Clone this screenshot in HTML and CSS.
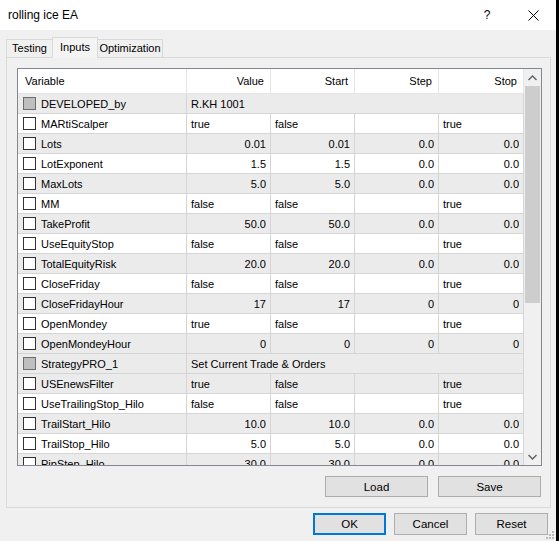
FILE: index.html
```html
<!DOCTYPE html>
<html lang="en">
<head>
    <meta charset="UTF-8">
    <title>rolling ice EA</title>
    <link rel="stylesheet" href="styles.css">
</head>
<body>
<div class="window">
    <div class="titlebar">
        <div class="title">rolling ice EA</div>
        <div class="caption-btn">?</div>
        <div class="caption-btn">
            <svg width="11" height="11" viewBox="0 0 11 11"><path d="M0.5 0.5 L10.5 10.5 M10.5 0.5 L0.5 10.5" stroke="#000" stroke-width="1" fill="none"/></svg>
        </div>
    </div>

    <div class="client">
        <div class="tabs">
            <div class="tab tab-testing">Testing</div>
            <div class="tab tab-inputs active">Inputs</div>
            <div class="tab tab-optimization">Optimization</div>
        </div>

        <div class="panel">
            <div class="grid">
                <div class="rows">
                    <div class="row head">
                        <div class="cell left">Variable</div>
                        <div class="cell">Value</div>
                        <div class="cell">Start</div>
                        <div class="cell">Step</div>
                        <div class="cell">Stop</div>
                    </div>

                    <div class="row section">
                        <div class="cell var"><span class="check disabled"></span>DEVELOPED_by</div>
                        <div class="cell wide">R.KH 1001</div>
                    </div>
                    <div class="row">
                        <div class="cell var"><span class="check"></span>MARtiScalper</div>
                        <div class="cell left">true</div>
                        <div class="cell left">false</div>
                        <div class="cell"></div>
                        <div class="cell left">true</div>
                    </div>
                    <div class="row alt">
                        <div class="cell var"><span class="check"></span>Lots</div>
                        <div class="cell">0.01</div>
                        <div class="cell">0.01</div>
                        <div class="cell">0.0</div>
                        <div class="cell">0.0</div>
                    </div>
                    <div class="row">
                        <div class="cell var"><span class="check"></span>LotExponent</div>
                        <div class="cell">1.5</div>
                        <div class="cell">1.5</div>
                        <div class="cell">0.0</div>
                        <div class="cell">0.0</div>
                    </div>
                    <div class="row alt">
                        <div class="cell var"><span class="check"></span>MaxLots</div>
                        <div class="cell">5.0</div>
                        <div class="cell">5.0</div>
                        <div class="cell">0.0</div>
                        <div class="cell">0.0</div>
                    </div>
                    <div class="row">
                        <div class="cell var"><span class="check"></span>MM</div>
                        <div class="cell left">false</div>
                        <div class="cell left">false</div>
                        <div class="cell"></div>
                        <div class="cell left">true</div>
                    </div>
                    <div class="row alt">
                        <div class="cell var"><span class="check"></span>TakeProfit</div>
                        <div class="cell">50.0</div>
                        <div class="cell">50.0</div>
                        <div class="cell">0.0</div>
                        <div class="cell">0.0</div>
                    </div>
                    <div class="row">
                        <div class="cell var"><span class="check"></span>UseEquityStop</div>
                        <div class="cell left">false</div>
                        <div class="cell left">false</div>
                        <div class="cell"></div>
                        <div class="cell left">true</div>
                    </div>
                    <div class="row alt">
                        <div class="cell var"><span class="check"></span>TotalEquityRisk</div>
                        <div class="cell">20.0</div>
                        <div class="cell">20.0</div>
                        <div class="cell">0.0</div>
                        <div class="cell">0.0</div>
                    </div>
                    <div class="row">
                        <div class="cell var"><span class="check"></span>CloseFriday</div>
                        <div class="cell left">false</div>
                        <div class="cell left">false</div>
                        <div class="cell"></div>
                        <div class="cell left">true</div>
                    </div>
                    <div class="row alt">
                        <div class="cell var"><span class="check"></span>CloseFridayHour</div>
                        <div class="cell">17</div>
                        <div class="cell">17</div>
                        <div class="cell">0</div>
                        <div class="cell">0</div>
                    </div>
                    <div class="row">
                        <div class="cell var"><span class="check"></span>OpenMondey</div>
                        <div class="cell left">true</div>
                        <div class="cell left">false</div>
                        <div class="cell"></div>
                        <div class="cell left">true</div>
                    </div>
                    <div class="row alt">
                        <div class="cell var"><span class="check"></span>OpenMondeyHour</div>
                        <div class="cell">0</div>
                        <div class="cell">0</div>
                        <div class="cell">0</div>
                        <div class="cell">0</div>
                    </div>
                    <div class="row section">
                        <div class="cell var"><span class="check disabled"></span>StrategyPRO_1</div>
                        <div class="cell wide">Set Current Trade &amp; Orders</div>
                    </div>
                    <div class="row alt">
                        <div class="cell var"><span class="check"></span>USEnewsFilter</div>
                        <div class="cell left">true</div>
                        <div class="cell left">false</div>
                        <div class="cell"></div>
                        <div class="cell left">true</div>
                    </div>
                    <div class="row">
                        <div class="cell var"><span class="check"></span>UseTrailingStop_Hilo</div>
                        <div class="cell left">false</div>
                        <div class="cell left">false</div>
                        <div class="cell"></div>
                        <div class="cell left">true</div>
                    </div>
                    <div class="row alt">
                        <div class="cell var"><span class="check"></span>TrailStart_Hilo</div>
                        <div class="cell">10.0</div>
                        <div class="cell">10.0</div>
                        <div class="cell">0.0</div>
                        <div class="cell">0.0</div>
                    </div>
                    <div class="row">
                        <div class="cell var"><span class="check"></span>TrailStop_Hilo</div>
                        <div class="cell">5.0</div>
                        <div class="cell">5.0</div>
                        <div class="cell">0.0</div>
                        <div class="cell">0.0</div>
                    </div>
                    <div class="row alt">
                        <div class="cell var"><span class="check"></span>PipStep_Hilo</div>
                        <div class="cell">30.0</div>
                        <div class="cell">30.0</div>
                        <div class="cell">0.0</div>
                        <div class="cell">0.0</div>
                    </div>
                </div>

                <div class="scrollbar">
                    <div class="sb-btn">
                        <svg width="9" height="6" viewBox="0 0 9 6"><path d="M0.5 5 L4.5 1 L8.5 5" stroke="#606060" stroke-width="1.4" fill="none"/></svg>
                    </div>
                    <div class="sb-track">
                        <div class="sb-thumb"></div>
                    </div>
                    <div class="sb-btn">
                        <svg width="9" height="6" viewBox="0 0 9 6"><path d="M0.5 1 L4.5 5 L8.5 1" stroke="#606060" stroke-width="1.4" fill="none"/></svg>
                    </div>
                </div>
            </div>

            <div class="panel-buttons">
                <button class="btn wide-btn">Load</button>
                <button class="btn wide-btn">Save</button>
            </div>
        </div>

        <div class="dialog-buttons">
            <button class="btn default">OK</button>
            <button class="btn">Cancel</button>
            <button class="btn">Reset</button>
        </div>

        <svg class="grip" width="9" height="9" viewBox="0 0 9 9">
            <rect x="6" y="0" width="2" height="2" fill="#b9b9b9"/>
            <rect x="3" y="3" width="2" height="2" fill="#b9b9b9"/>
            <rect x="6" y="3" width="2" height="2" fill="#b9b9b9"/>
            <rect x="0" y="6" width="2" height="2" fill="#b9b9b9"/>
            <rect x="3" y="6" width="2" height="2" fill="#b9b9b9"/>
            <rect x="6" y="6" width="2" height="2" fill="#b9b9b9"/>
        </svg>
    </div>
</div>
</body>
</html>
```

FILE: styles.css
```css
body {
    margin: 0;
    background-color: #f0f0f0;
    font-family: "Liberation Sans", Arial, sans-serif;
    font-size: 11px;
    color: #000;
}
.window {
    width: 556px;
    height: 541px;
    border-right: 3px solid #000;
    background-color: #f0f0f0;
    display: flex;
    flex-direction: column;
}
.titlebar {
    height: 30px;
    background-color: #fff;
    display: flex;
    align-items: center;
    padding-left: 8px;
    font-size: 12px;
}
.title {
    flex: 1;
}
.caption-btn {
    width: 46px;
    height: 30px;
    display: flex;
    align-items: center;
    justify-content: center;
    font-size: 12px;
}
.client {
    flex: 1;
    position: relative;
    padding: 7px 0 0 6px;
    display: flex;
    flex-direction: column;
}
.tabs {
    display: flex;
    align-items: flex-end;
    height: 20px;
}
.tab {
    box-sizing: border-box;
    height: 18px;
    line-height: 17px;
    text-align: center;
    border: 1px solid #d9d9d9;
    border-bottom: none;
    background-color: #f0f0f0;
}
.tab-testing {
    width: 47px;
}
.tab-inputs {
    width: 46px;
    margin-left: -1px;
}
.tab-optimization {
    width: 66px;
    margin-left: -1px;
}
.tab.active {
    height: 21px;
    line-height: 18px;
    margin-bottom: -1px;
    background-color: #f4f4f4;
    position: relative;
    z-index: 1;
}
.panel {
    box-sizing: border-box;
    width: 545px;
    border: 1px solid #d9d9d9;
    padding: 10px 8px 10px 10px;
}
.grid {
    box-sizing: border-box;
    width: 525px;
    height: 398px;
    border: 1px solid #828790;
    background-color: #fff;
    display: flex;
}
.rows {
    width: 506px;
    overflow: hidden;
}
.row {
    display: grid;
    grid-template-columns: 169px 84px 84px 84px 85px;
    box-sizing: border-box;
    height: 20px;
    border-bottom: 1px solid #d5d5d5;
    background-color: #fff;
}
.row.alt, .row.section {
    background-color: #ebebeb;
}
.row.head {
    height: 25px;
    border-bottom-color: #e5e5e5;
    background-color: #fff;
}
.cell {
    box-sizing: border-box;
    border-right: 1px solid #d5d5d5;
    padding: 0 4px;
    display: flex;
    align-items: center;
    justify-content: flex-end;
    white-space: nowrap;
    overflow: hidden;
}
.head .cell {
    border-right-color: #e5e5e5;
    padding: 0 6px;
}
.head .cell.left {
    padding-left: 7px;
}
.cell.left {
    justify-content: flex-start;
}
.cell.var {
    justify-content: flex-start;
    padding-left: 5px;
}
.cell.wide {
    grid-column: 2 / span 4;
    justify-content: flex-start;
}
.check {
    box-sizing: border-box;
    width: 13px;
    height: 13px;
    border: 1px solid #333;
    background-color: #fff;
    margin-right: 5px;
    flex-shrink: 0;
}
.check.disabled {
    border-color: #6d6d6d;
    background-color: #bfbfbf;
}
.scrollbar {
    width: 17px;
    background-color: #f0f0f0;
    display: flex;
    flex-direction: column;
}
.sb-btn {
    height: 17px;
    display: flex;
    align-items: center;
    justify-content: center;
}
.sb-track {
    flex: 1;
}
.sb-thumb {
    height: 217px;
    margin: 0 1px;
    background-color: #cdcdcd;
}
.btn {
    box-sizing: border-box;
    width: 73px;
    height: 22px;
    padding: 0;
    border: 1px solid #adadad;
    background-color: #e1e1e1;
    font-family: "Liberation Sans", Arial, sans-serif;
    font-size: 11.5px;
    color: #000;
}
.btn.default {
    border: 2px solid #0078d7;
}
.panel-buttons {
    display: flex;
    justify-content: flex-end;
    gap: 10px;
    margin-top: 10px;
    padding-right: 1px;
}
.wide-btn {
    width: 103px;
    height: 21px;
}
.dialog-buttons {
    display: flex;
    justify-content: flex-end;
    gap: 8px;
    margin-top: 5px;
    padding-right: 8px;
}
.grip {
    position: absolute;
    right: 1px;
    bottom: 1px;
}
```
